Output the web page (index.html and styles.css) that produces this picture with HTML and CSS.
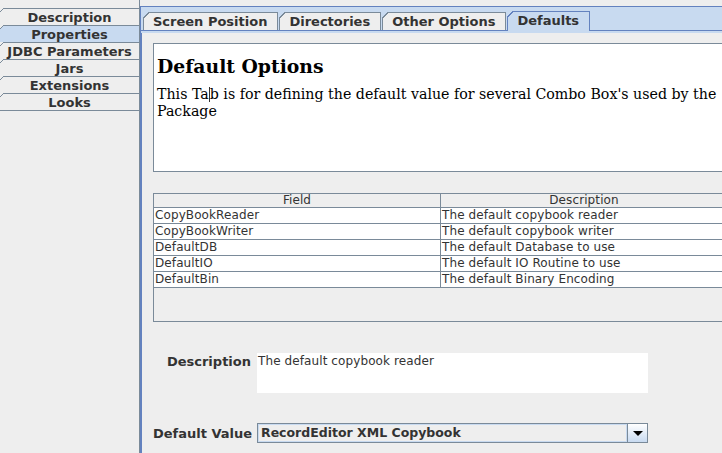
FILE: index.html
```html
<!DOCTYPE html>
<html>
<head>
<meta charset="utf-8">
<link rel="stylesheet" href="styles.css">
</head>
<body>
<div class="app">
  <nav class="side">
    <div class="vtab">Description</div>
    <div class="vtab sel">Properties</div>
    <div class="vtab">JDBC Parameters</div>
    <div class="vtab">Jars</div>
    <div class="vtab">Extensions</div>
    <div class="vtab last">Looks</div>
  </nav>
  <div class="main">
    <div class="tabrow">
      <div class="tab">Screen Position</div>
      <div class="tab">Directories</div>
      <div class="tab">Other Options</div>
      <div class="tab sel">Defaults</div>
    </div>
    <div class="pane">
      <div class="info">
        <h1>Default Options</h1>
        <p>This Ta<span class="caret"></span>b is for defining the default value for several Combo Box's used by the<br>Package</p>
      </div>
      <div class="tablewrap">
        <table>
          <colgroup><col class="c1"><col class="c2"></colgroup>
          <thead>
            <tr><th>Field</th><th>Description</th></tr>
          </thead>
          <tbody>
            <tr><td>CopyBookReader</td><td>The default copybook reader</td></tr>
            <tr><td>CopyBookWriter</td><td>The default copybook writer</td></tr>
            <tr><td>DefaultDB</td><td>The default Database to use</td></tr>
            <tr><td>DefaultIO</td><td>The default IO Routine to use</td></tr>
            <tr><td>DefaultBin</td><td>The default Binary Encoding</td></tr>
          </tbody>
        </table>
      </div>
      <div class="form">
        <label class="lbl top">Description</label>
        <div class="textarea">The default copybook reader</div>
        <label class="lbl mid">Default Value</label>
        <div class="combo">
          <span class="combo-text">RecordEditor XML Copybook</span>
          <span class="combo-btn"><svg width="10" height="6" viewBox="0 0 10 6"><polygon points="0,0 10,0 5,5" fill="#000"/></svg></span>
        </div>
      </div>
    </div>
  </div>
</div>
</body>
</html>
```

FILE: styles.css
```css
html, body {
  margin: 0;
  padding: 0;
  width: 722px;
  height: 453px;
  overflow: hidden;
  background: #eeeeee;
}
body {
  font-family: "DejaVu Sans", sans-serif;
  font-size: 12px;
  color: #333333;
}
.app {
  display: flex;
  height: 453px;
}
.side {
  flex: none;
  width: 140px;
  box-sizing: border-box;
  border-right: 1px solid #7a8a99;
  padding-top: 8px;
}
.vtab {
  position: relative;
  height: 16px;
  line-height: 17px;
  border-top: 1px solid #7a8a99;
  text-align: center;
  font-weight: bold;
  font-size: 13px;
  background: #eeeeee;
}
.vtab::before {
  content: "";
  position: absolute;
  left: 0;
  top: -1px;
  width: 4px;
  height: 4px;
  background: linear-gradient(135deg, #eeeeee 0 42%, #7a8a99 42% 62%, transparent 62%);
}
.vtab.sel {
  background: #c8daf0;
}
.vtab.last {
  border-bottom: 1px solid #7a8a99;
}
.main {
  flex: 1;
  min-width: 0;
  margin-top: 6px;
  border-top: 1px solid #6382bf;
  border-left: 1px solid #6382bf;
  background: #c8daf0;
  display: flex;
  flex-direction: column;
  overflow: hidden;
}
.tabrow {
  height: 23px;
  display: flex;
  align-items: flex-end;
  padding-left: 2px;
  border-bottom: 1px solid #6382bf;
}
.tab {
  height: 17px;
  line-height: 17px;
  border: 1px solid #7a8a99;
  border-bottom: none;
  background: #eeeeee;
  padding: 0 10px 0 9px;
  margin-right: 1px;
  font-weight: bold;
  font-size: 13px;
  white-space: nowrap;
  position: relative;
}
.tab::before {
  content: "";
  position: absolute;
  left: -1px;
  top: -1px;
  width: 6px;
  height: 6px;
  background: linear-gradient(135deg, #c8daf0 0 44%, #7a8a99 44% 60%, transparent 60%);
}
.tab.sel {
  height: 19px;
  line-height: 17px;
  margin-bottom: -1px;
  background: #c8daf0;
  border-color: #6382bf;
  z-index: 1;
}
.tab.sel::before {
  background: linear-gradient(135deg, #c8daf0 0 44%, #6382bf 44% 60%, transparent 60%);
}
.pane {
  flex: 1;
  margin-top: 2px;
  background: #eeeeee;
  border-left: 1px solid #6382bf;
  padding: 10px 0 0 11px;
}
.info {
  width: 600px;
  height: 127px;
  border: 1px solid #7a8a99;
  background: #ffffff;
  padding: 0 3px;
  font-family: "DejaVu Serif", serif;
  color: #000000;
}
.info h1 {
  margin: 0;
  padding-top: 10px;
  font-size: 18.8px;
  line-height: 24px;
  font-weight: bold;
}
.info p {
  margin: 8px 0 0 0;
  font-size: 14.2px;
  line-height: 17px;
}
.caret {
  display: inline-block;
  width: 0;
  height: 15px;
  border-left: 1px solid #333333;
  vertical-align: -3px;
}
.tablewrap {
  width: 574px;
  height: 127px;
  margin-top: 21px;
  border: 1px solid #7a8a99;
  border-right: none;
  background: #eeeeee;
}
table {
  border-collapse: separate;
  border-spacing: 0;
  table-layout: fixed;
  width: 574px;
  letter-spacing: 0.1px;
}
col.c1 { width: 287px; }
col.c2 { width: 287px; }
th {
  font-weight: normal;
  height: 13px;
  line-height: 13px;
  padding: 0;
  text-align: center;
  background: #eeeeee;
  border-right: 1px solid #7a8a99;
  border-bottom: 1px solid #7a8a99;
}
td {
  height: 15px;
  line-height: 15px;
  padding: 0 0 0 1px;
  background: #ffffff;
  border-right: 1px solid #7a8a99;
  border-bottom: 1px solid #7a8a99;
  white-space: nowrap;
  overflow: hidden;
}
.form {
  display: grid;
  grid-template-columns: 98px 391px;
  column-gap: 6px;
  row-gap: 30px;
  margin-top: 31px;
}
.lbl {
  font-weight: bold;
  font-size: 13px;
  text-align: right;
  white-space: nowrap;
}
.lbl.top {
  align-self: start;
  line-height: 15px;
  padding-top: 1px;
}
.lbl.mid {
  align-self: center;
}
.textarea {
  height: 40px;
  background: #ffffff;
  padding: 0 1px;
  line-height: 15px;
  box-sizing: border-box;
  padding-top: 1px;
  letter-spacing: 0.1px;
}
.combo {
  height: 20px;
  box-sizing: border-box;
  display: flex;
  border: 1px solid #7a8a99;
  background: #eeeeee;
}
.combo-text {
  flex: 1;
  border: 1px solid #c8daf0;
  padding-left: 2px;
  font-weight: bold;
  font-size: 12.5px;
  line-height: 16px;
  white-space: nowrap;
}
.combo-btn {
  flex: none;
  width: 19px;
  border-left: 1px solid #7a8a99;
  background: linear-gradient(#ffffff, #c8daf0);
  display: flex;
  align-items: center;
  justify-content: center;
}
.combo-btn svg {
  display: block;
  margin-top: 1px;
}
```
